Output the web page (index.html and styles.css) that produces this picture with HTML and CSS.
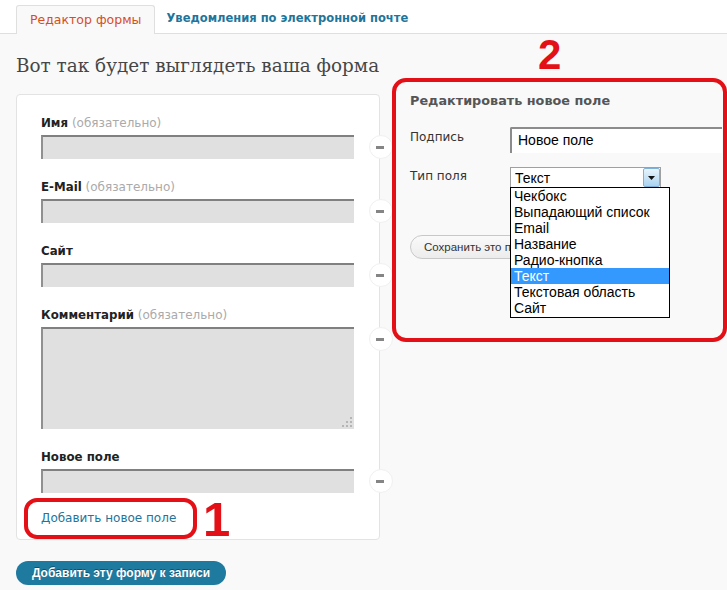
FILE: index.html
```html
<!DOCTYPE html>
<html lang="ru">
<head>
<meta charset="utf-8">
<title>Редактор формы</title>
<link rel="stylesheet" href="styles.css">
</head>
<body>
<div class="tabs">
  <div class="tab tab-active">Редактор формы</div>
  <div class="tab tab-link">Уведомления по электронной почте</div>
</div>
<div class="main">
  <div class="left">
    <h2 class="preview-title">Вот так будет выглядеть ваша форма</h2>
    <div class="card">
      <div class="field">
        <div class="label"><b>Имя</b> <span class="req">(обязательно)</span></div>
        <div class="input"></div>
        <span class="handle"><i></i></span>
      </div>
      <div class="field">
        <div class="label"><b>E-Mail</b> <span class="req">(обязательно)</span></div>
        <div class="input"></div>
        <span class="handle"><i></i></span>
      </div>
      <div class="field">
        <div class="label"><b>Сайт</b></div>
        <div class="input"></div>
        <span class="handle"><i></i></span>
      </div>
      <div class="field">
        <div class="label"><b>Комментарий</b> <span class="req">(обязательно)</span></div>
        <div class="input textarea">
          <svg class="grip" width="12" height="12" viewBox="0 0 12 12"><g fill="#b5b5b5"><rect x="9" y="1" width="2" height="2"/><rect x="5" y="5" width="2" height="2"/><rect x="9" y="5" width="2" height="2"/><rect x="1" y="9" width="2" height="2"/><rect x="5" y="9" width="2" height="2"/><rect x="9" y="9" width="2" height="2"/></g></svg>
        </div>
        <span class="handle"><i></i></span>
      </div>
      <div class="field field-last">
        <div class="label"><b>Новое поле</b></div>
        <div class="input"></div>
        <span class="handle"><i></i></span>
      </div>
      <a class="add-link">Добавить новое поле</a>
      <span class="ring ring-1"></span>
      <span class="mark mark-1">1</span>
    </div>
    <button class="submit">Добавить эту форму к записи</button>
  </div>
  <div class="right">
    <span class="mark mark-2">2</span>
    <div class="editor">
      <div class="editor-title">Редактировать новое поле</div>
      <div class="row">
        <div class="row-label">Подпись</div>
        <div class="text-input">Новое поле</div>
      </div>
      <div class="row row-type">
        <div class="row-label">Тип поля</div>
        <div class="select-wrap">
          <div class="select">
            <span>Текст</span>
            <span class="arrow"><svg width="7" height="4" viewBox="0 0 7 4"><path d="M0 0h7L3.5 4z" fill="#111"/></svg></span>
          </div>
          <ul class="options">
            <li>Чекбокс</li>
            <li>Выпадающий список</li>
            <li>Email</li>
            <li>Название</li>
            <li>Радио-кнопка</li>
            <li class="selected">Текст</li>
            <li>Текстовая область</li>
            <li>Сайт</li>
          </ul>
        </div>
      </div>
      <button class="save">Сохранить это поле</button>
    </div>
  </div>
</div>
</body>
</html>
```
FILE: styles.css
```css
* { box-sizing: border-box; }
html, body { margin: 0; padding: 0; }
body {
  background: #f9f9f9;
  font-family: "DejaVu Sans", Verdana, sans-serif;
  font-size: 12px;
  color: #333;
  width: 727px;
  height: 590px;
  overflow: hidden;
}

/* tabs */
.tabs {
  display: flex;
  align-items: flex-end;
  height: 34px;
  padding: 5px 0 0 16px;
  background: #fff;
  border-bottom: 1px solid #dfdfdf;
}
.tab {
  height: 29px;
  line-height: 28px;
  padding: 0 14px;
  white-space: nowrap;
}
.tab-active {
  color: #d54e21;
  background: #f9f9f9;
  border: 1px solid #dfdfdf;
  border-bottom: none;
  border-radius: 3px 3px 0 0;
  margin-bottom: -1px;
  padding: 0 12px 0 13px;
  font-size: 12.5px;
}
.tab-link {
  color: #21759b;
  font-weight: bold;
  font-size: 11.5px;
  padding-left: 12px;
}

/* main */
.main {
  display: flex;
  gap: 12px;
  padding-left: 16px;
}
.left { width: 364px; }
.preview-title {
  font-family: "DejaVu Serif", Georgia, serif;
  font-weight: normal;
  font-size: 18.4px;
  line-height: 26px;
  color: #464646;
  margin: 19px 0 15px;
  white-space: nowrap;
}
.card {
  position: relative;
  height: 446px;
  background: #fff;
  border: 1px solid #e3e3e3;
  border-radius: 4px;
  padding: 19px 25px 0 24px;
}
.field {
  position: relative;
  width: 313px;
  margin-bottom: 19px;
}
.field-last { margin-bottom: 16px; }
.label {
  height: 18px;
  line-height: 18px;
  margin-bottom: 3px;
  color: #222;
  white-space: nowrap;
}
.label b { font-weight: bold; font-size: 11.8px; }
.req { color: #aaa; }
.input {
  position: relative;
  height: 24px;
  background: #e0e0e0;
  border-top: 2px solid #808080;
  border-left: 2px solid #909090;
}
.textarea { height: 102px; }
.grip { position: absolute; right: 1px; bottom: 1px; }
.handle {
  position: absolute;
  left: 328px;
  top: 21px;
  width: 24px;
  height: 24px;
  border-radius: 50%;
  background: #fff;
  border: 1px solid #f0f0f0;
  display: flex;
  align-items: center;
  justify-content: center;
}
.handle i {
  display: block;
  width: 8px;
  height: 3px;
  background: #858585;
  margin-left: -2px;
}
.add-link {
  display: block;
  height: 18px;
  line-height: 18px;
  color: #21759b;
  white-space: nowrap;
}
.ring {
  position: absolute;
  border: 4px solid #e41017;
  border-radius: 13px;
}
.ring-1 { left: 7px; top: 403px; width: 173px; height: 41px; }
.mark {
  position: absolute;
  font-family: "Liberation Sans", Arial, sans-serif;
  font-weight: bold;
  color: #e41017;
  line-height: 1;
}
.mark-1 { left: 186px; top: 400px; font-size: 49px; }
.submit {
  display: block;
  margin-top: 21px;
  width: 210px;
  height: 24px;
  padding: 0;
  border: none;
  border-radius: 12px;
  background: #1f7aa0;
  color: #fff;
  font-family: "Liberation Sans", Arial, sans-serif;
  font-weight: bold;
  font-size: 12px;
  text-shadow: 0 -1px 0 #0c4f6b;
}

/* right */
.right {
  position: relative;
  width: 335px;
  padding-top: 44px;
}
.mark-2 { left: 146px; top: 0; font-size: 42px; }
.editor {
  height: 264px;
  border: 4px solid #e41017;
  border-radius: 14px;
  padding: 10px 0 0 14px;
  overflow: hidden;
}
.editor-title {
  height: 18px;
  line-height: 18px;
  font-weight: bold;
  font-size: 12.8px;
  color: #555;
  margin-bottom: 17px;
}
.row {
  display: flex;
  align-items: flex-start;
}
.row-label {
  width: 100px;
  line-height: 20px;
  color: #333;
}
.text-input {
  width: 212px;
  height: 26px;
  background: #fff;
  border-top: 2px solid #8c8c8c;
  border-left: 2px solid #8c8c8c;
  border-radius: 2px 0 0 0;
  font-family: "Liberation Sans", Arial, sans-serif;
  font-size: 14px;
  line-height: 22px;
  padding-left: 6px;
  color: #000;
}
.row-type { margin-top: 14px; }
.row-type .row-label { line-height: 18px; }
.select-wrap { position: relative; }
.select {
  width: 151px;
  height: 20px;
  background: #fff;
  border: 1px solid #a0a0a0;
  border-bottom: none;
  display: flex;
  align-items: center;
  justify-content: space-between;
  padding-left: 4px;
  font-family: "Liberation Sans", Arial, sans-serif;
  font-size: 14px;
  color: #000;
}
.arrow {
  width: 17px;
  height: 19px;
  border: 1px solid #7fb2d6;
  border-radius: 2px;
  background: linear-gradient(#e8f4fc, #a9d3f0);
  display: flex;
  align-items: center;
  justify-content: center;
}
.options {
  position: absolute;
  left: 0;
  top: 20px;
  width: 160px;
  margin: 0;
  padding: 0 0 1px;
  list-style: none;
  background: #fff;
  border: 1px solid #000;
  font-family: "Liberation Sans", Arial, sans-serif;
  font-size: 14px;
  color: #000;
  z-index: 2;
}
.options li {
  height: 16px;
  line-height: 16px;
  padding-left: 3px;
  white-space: nowrap;
}
.options li.selected { background: #3399ff; color: #fff; }
.save {
  display: block;
  margin-top: 48px;
  height: 24px;
  padding: 0 13px;
  border: 1px solid #c8c8c8;
  border-radius: 12px;
  background: linear-gradient(#fafafa, #ececec);
  font-family: "Liberation Sans", Arial, sans-serif;
  font-size: 11.5px;
  color: #333;
}
```
